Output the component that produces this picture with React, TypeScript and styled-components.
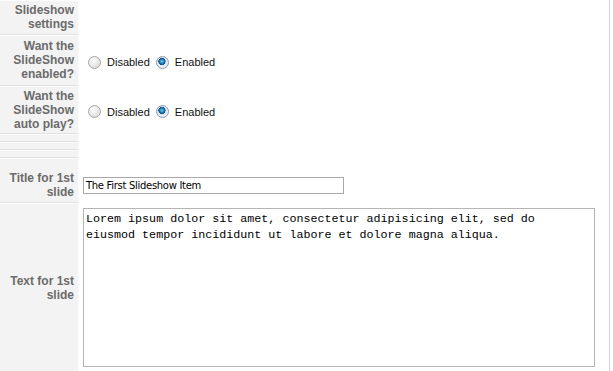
import styled, { createGlobalStyle } from "styled-components";

const Global = createGlobalStyle`
  body {
    margin: 0;
    background: #fff;
    font-family: "Liberation Sans", Arial, sans-serif;
  }
`;

const Sheet = styled.div`
  width: 609px;
  border-right: 1px solid #d4d4d4;
  min-height: 371px;
  display: flex;
  flex-direction: column;
`;

const Row = styled.div<{ $h: number }>`
  display: grid;
  grid-template-columns: 79px 1fr;
  height: ${(p) => p.$h}px;
`;

const Label = styled.div<{ $pt?: number }>`
  background: #f3f3f3;
  border-bottom: 1px solid #e2e2e2;
  border-right: 1px solid #fbfbfb;
  box-shadow: inset 0 1px 0 #fcfcfc;
  display: flex;
  align-items: center;
  justify-content: flex-end;
  text-align: right;
  padding-right: 4px;
  padding-top: ${(p) => p.$pt ?? 0}px;
  font-size: 12px;
  font-weight: bold;
  line-height: 14px;
  color: #6b6b6b;
`;

const Field = styled.div<{ $top?: number }>`
  display: flex;
  align-items: ${(p) => (p.$top !== undefined ? "flex-start" : "center")};
  padding-left: 4px;
  padding-top: ${(p) => p.$top ?? 0}px;
`;

const Options = styled.div`
  display: flex;
  align-items: center;
  gap: 6px;
  padding-left: 5px;
  padding-top: 3px;
  font-size: 11px;
  color: #111;
`;

const Option = styled.label`
  display: flex;
  align-items: center;
  gap: 6px;
`;

const Dot = styled.span<{ $on?: boolean }>`
  width: 11px;
  height: 11px;
  border-radius: 50%;
  border: 1px solid ${(p) => (p.$on ? "#8a9aa8" : "#a8a8a8")};
  background: ${(p) =>
    p.$on
      ? "radial-gradient(circle at 45% 40%, #7fd0f0 0, #1a79b8 2.2px, #0b4f86 3.4px, #dfe6ec 3.8px, #f6f6f6 100%)"
      : "radial-gradient(circle at 40% 35%, #ffffff 0, #e8e8e8 50%, #cfcfcf 100%)"};
`;

const TitleInput = styled.div`
  width: 257px;
  height: 15px;
  border: 1px solid #a9a9a9;
  font-family: "DejaVu Sans", Tahoma, sans-serif;
  font-size: 10px;
  letter-spacing: -0.3px;
  line-height: 15px;
  padding-left: 2px;
  color: #000;
`;

const TextArea = styled.div`
  width: 506px;
  height: 153px;
  border: 1px solid #b5b5b5;
  padding: 2px 2px;
  font-family: "Liberation Mono", "Courier New", monospace;
  font-size: 11.7px;
  line-height: 16px;
  color: #000;
  white-space: pre-wrap;
`;

const App = () => {
  return (
    <>
      <Global />
      <Sheet>
        <Row $h={35}>
          <Label>
            Slideshow
            <br />
            settings
          </Label>
          <Field />
        </Row>
        <Row $h={51}>
          <Label>
            Want the
            <br />
            SlideShow
            <br />
            enabled?
          </Label>
          <Field>
            <Options>
              <Option>
                <Dot /> Disabled
              </Option>
              <Option>
                <Dot $on /> Enabled
              </Option>
            </Options>
          </Field>
        </Row>
        <Row $h={48}>
          <Label>
            Want the
            <br />
            SlideShow
            <br />
            auto play?
          </Label>
          <Field>
            <Options>
              <Option>
                <Dot /> Disabled
              </Option>
              <Option>
                <Dot $on /> Enabled
              </Option>
            </Options>
          </Field>
        </Row>
        <Row $h={8}>
          <Label />
          <Field />
        </Row>
        <Row $h={8}>
          <Label />
          <Field />
        </Row>
        <Row $h={8}>
          <Label />
          <Field />
        </Row>
        <Row $h={45}>
          <Label $pt={10}>
            Title for 1st
            <br />
            slide
          </Label>
          <Field $top={19}>
            <TitleInput>The First Slideshow Item</TitleInput>
          </Field>
        </Row>
        <Row $h={170}>
          <Label>
            Text for 1st
            <br />
            slide
          </Label>
          <Field $top={5}>
            <TextArea>
              {"Lorem ipsum dolor sit amet, consectetur adipisicing elit, sed do\neiusmod tempor incididunt ut labore et dolore magna aliqua."}
            </TextArea>
          </Field>
        </Row>
      </Sheet>
    </>
  );
};

export default App;
